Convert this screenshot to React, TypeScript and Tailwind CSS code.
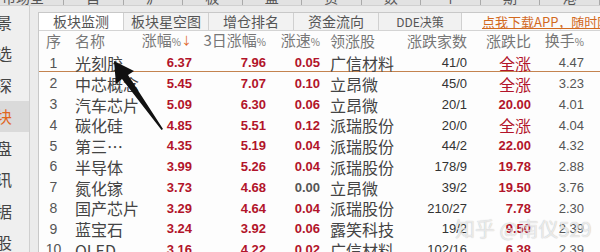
const rows = [
  { n: "1", name: "光刻胶", zf: "6.37", d3: "7.96", zs: "0.05", lead: "广信材料", jia: "41/0", bi: "全涨", hs: "4.47" },
  { n: "2", name: "中芯概念", zf: "5.45", d3: "7.07", zs: "0.10", lead: "立昂微", jia: "45/0", bi: "全涨", hs: "3.23" },
  { n: "3", name: "汽车芯片", zf: "5.09", d3: "6.30", zs: "0.06", lead: "立昂微", jia: "20/1", bi: "20.00", hs: "4.01" },
  { n: "4", name: "碳化硅", zf: "4.85", d3: "5.51", zs: "0.12", lead: "派瑞股份", jia: "20/0", bi: "全涨", hs: "4.04" },
  { n: "5", name: "第三…", zf: "4.35", d3: "5.19", zs: "0.04", lead: "派瑞股份", jia: "44/2", bi: "22.00", hs: "4.32" },
  { n: "6", name: "半导体", zf: "3.99", d3: "5.26", zs: "0.04", lead: "派瑞股份", jia: "178/9", bi: "19.78", hs: "2.88" },
  { n: "7", name: "氮化镓", zf: "3.73", d3: "4.68", zs: "0.00", lead: "立昂微", jia: "39/2", bi: "19.50", hs: "3.76" },
  { n: "8", name: "国产芯片", zf: "3.29", d3: "4.64", zs: "0.04", lead: "派瑞股份", jia: "210/27", bi: "7.78", hs: "2.30" },
  { n: "9", name: "蓝宝石", zf: "3.24", d3: "3.92", zs: "0.06", lead: "露笑科技", jia: "19/2", bi: "9.50", hs: "2.39" },
  { n: "10", name: "OLED", zf: "3.16", d3: "4.22", zs: "0.02", lead: "广信材料", jia: "102/16", bi: "6.38", hs: "2.39" },
];

const side = ["景", "选", "深", "块", "盘", "讯", "据", "股"];
const tabs = ["板块监测", "板块星空图", "增仓排名", "资金流向"];
const cols = "grid grid-cols-[29px_82px_42px_74px_54px_80px_67px_64px_53px_1fr] items-center";
const num = "text-right font-['Liberation_Sans',sans-serif] text-[13px] font-bold";
const red = "text-[#b2142a]";
const cjk = "font-['Noto_Sans_CJK_SC',sans-serif]";

function Pct({ label }: { label: string }) {
  return (
    <span>
      {label}
      <span className="text-[10px]">%</span>
    </span>
  );
}

export default function App() {
  return (
    <div className={`relative h-[252px] w-[600px] overflow-hidden bg-[#ebebeb] ${cjk}`}>
      <div className="flex h-[6px] gap-[22px] overflow-hidden border-b border-[#d0d0d0] bg-[#e2e2e2] pl-[2px] text-[14px] leading-[14px] text-[#555]">
        {["市场全景", "自选", "沪深", "板块", "盘口", "资讯", "数据", "个股", "期货", "港股"].map((t) => (
          <span key={t} className="-mt-[10px] border-r border-[#aaa] pr-[12px]">
            {t}
          </span>
        ))}
      </div>
      <div className="flex">
        <div className="w-[30px] shrink-0 border-r border-[#cfcfcf] bg-[#efefef]">
          {side.map((c) => (
            <div
              key={c}
              className={`flex h-[31.5px] items-center text-[16px] ${
                c === "块" ? "bg-[#dadada] text-[#e0661e]" : "text-[#444]"
              }`}
            >
              <span className="-ml-[4px]">{c}</span>
            </div>
          ))}
        </div>
        <div className="ml-[8px] mt-[6px] flex-1 border-l border-t border-[#c8c8c8] bg-[#fdfdfd]">
          <div className="flex h-[18px] border-b border-[#d4d4d4] bg-[#f1f1f1] text-[14px] leading-[17px] text-[#555]">
            {tabs.map((t, i) => (
              <div
                key={t}
                className={`w-[85px] border-r border-[#d0d0d0] text-center ${
                  i === 0 ? "w-[83px] bg-white" : "bg-[#f2f2f2]"
                }`}
              >
                {t}
              </div>
            ))}
            <div className="w-[83px] border-r border-[#d0d0d0] text-center text-[12px]">DDE决策</div>
            <div className="flex-1 whitespace-nowrap bg-[#fafafa] pl-[20px] text-[13px] text-[#d2691e] underline">
              点我下载APP，随时随地看行情
            </div>
          </div>
          <div className={`${cols} h-[20px] text-[15px] leading-[18px] text-[#777]`}>
            <span className="text-center">序</span>
            <span className="pl-[7px]">名称</span>
            <span className="flex justify-end whitespace-nowrap">
              <Pct label="涨幅" />
              <span className="text-[11px] text-[#e0661e]">↓</span>
            </span>
            <span className="flex justify-end whitespace-nowrap">
              <Pct label="3日涨幅" />
            </span>
            <span className="flex justify-end whitespace-nowrap">
              <Pct label="涨速" />
            </span>
            <span className="pl-[10px]">领涨股</span>
            <span className="text-right">涨跌家数</span>
            <span className="text-right">涨跌比</span>
            <span className="flex justify-end whitespace-nowrap">
              <Pct label="换手" />
            </span>
            <span />
          </div>
          {rows.map((r, i) => (
            <div
              key={r.n}
              className={`${cols} h-[20.75px] ${i === 0 ? "border-b border-[#c4834f]" : ""}`}
            >
              <span className="text-center font-['Liberation_Sans',sans-serif] text-[14px] text-[#555]">{r.n}</span>
              <span className="whitespace-nowrap pl-[7px] text-[16px] text-[#444]">{r.name}</span>
              <span className={`${num} ${red}`}>{r.zf}</span>
              <span className={`${num} ${red}`}>{r.d3}</span>
              <span className={`${num} ${r.zs === "0.00" ? "text-[#555]" : red}`}>{r.zs}</span>
              <span className="whitespace-nowrap pl-[10px] text-[16px] text-[#444]">{r.lead}</span>
              <span className="text-right font-['Liberation_Sans',sans-serif] text-[13px] text-[#333]">{r.jia}</span>
              {r.bi === "全涨" ? (
                <span className={`text-right text-[16px] ${red}`}>{r.bi}</span>
              ) : (
                <span className={`${num} ${red}`}>{r.bi}</span>
              )}
              <span className="text-right font-['Liberation_Sans',sans-serif] text-[13px] text-[#555]">{r.hs}</span>
              <span />
            </div>
          ))}
        </div>
      </div>

      <svg className="pointer-events-none absolute left-0 top-0" width="600" height="252">
        <polygon
          points="114,61 116,84 122,79 161.5,130 163,129 128,75 134,71"
          fill="#111"
        />
      </svg>

      <div className="pointer-events-none absolute left-[455px] top-[214px] whitespace-nowrap text-[20px] text-white/70 [text-shadow:0_0_1px_rgba(0,0,0,0.3)]">
        知乎 @南仪529
      </div>
    </div>
  );
}
